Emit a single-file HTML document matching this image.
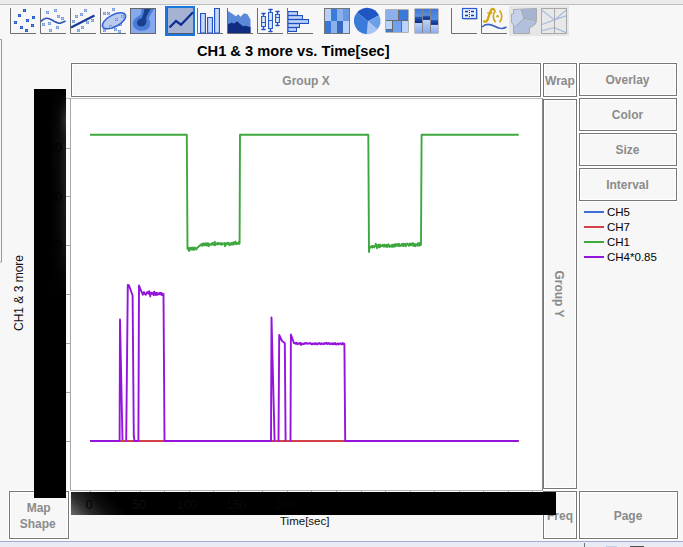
<!DOCTYPE html>
<html><head><meta charset="utf-8"><style>
html,body{margin:0;padding:0;width:683px;height:547px;overflow:hidden;background:#f7f7f7;}
svg{display:block;font-family:"Liberation Sans",sans-serif;}
</style></head><body>
<svg width="683" height="547" viewBox="0 0 683 547">
<rect width="683" height="547" fill="#f7f7f7"/>
<rect x="0" y="0" width="683" height="4" fill="#ebebeb"/>
<rect x="0" y="4" width="683" height="1" fill="#bdbdbd"/>
<path d="M10.5 8 V33.5 H36" fill="none" stroke="#6e6e6e" stroke-width="1"/>
<rect x="23.0" y="9.0" width="3" height="3" fill="#2050c4"/><rect x="24.0" y="9.0" width="1" height="3" fill="#3f70dc"/><rect x="23.0" y="10.0" width="3" height="1" fill="#3f70dc"/>
<rect x="18.0" y="14.0" width="3" height="3" fill="#2050c4"/><rect x="19.0" y="14.0" width="1" height="3" fill="#3f70dc"/><rect x="18.0" y="15.0" width="3" height="1" fill="#3f70dc"/>
<rect x="32.0" y="16.0" width="3" height="3" fill="#2050c4"/><rect x="33.0" y="16.0" width="1" height="3" fill="#3f70dc"/><rect x="32.0" y="17.0" width="3" height="1" fill="#3f70dc"/>
<rect x="26.0" y="19.0" width="3" height="3" fill="#2050c4"/><rect x="27.0" y="19.0" width="1" height="3" fill="#3f70dc"/><rect x="26.0" y="20.0" width="3" height="1" fill="#3f70dc"/>
<rect x="14.0" y="21.0" width="3" height="3" fill="#2050c4"/><rect x="15.0" y="21.0" width="1" height="3" fill="#3f70dc"/><rect x="14.0" y="22.0" width="3" height="1" fill="#3f70dc"/>
<rect x="31.0" y="24.0" width="3" height="3" fill="#2050c4"/><rect x="32.0" y="24.0" width="1" height="3" fill="#3f70dc"/><rect x="31.0" y="25.0" width="3" height="1" fill="#3f70dc"/>
<rect x="20.0" y="26.0" width="3" height="3" fill="#2050c4"/><rect x="21.0" y="26.0" width="1" height="3" fill="#3f70dc"/><rect x="20.0" y="27.0" width="3" height="1" fill="#3f70dc"/>
<rect x="25.0" y="29.0" width="3" height="3" fill="#2050c4"/><rect x="26.0" y="29.0" width="1" height="3" fill="#3f70dc"/><rect x="25.0" y="30.0" width="3" height="1" fill="#3f70dc"/>
<path d="M40.5 8 V33.5 H66" fill="none" stroke="#6e6e6e" stroke-width="1"/>
<rect x="46.0" y="11.0" width="3" height="3" fill="#7096da"/><rect x="47.0" y="11.0" width="1" height="3" fill="#9cb6ea"/><rect x="46.0" y="12.0" width="3" height="1" fill="#9cb6ea"/>
<rect x="54.0" y="9.0" width="3" height="3" fill="#7096da"/><rect x="55.0" y="9.0" width="1" height="3" fill="#9cb6ea"/><rect x="54.0" y="10.0" width="3" height="1" fill="#9cb6ea"/>
<rect x="57.0" y="15.0" width="3" height="3" fill="#7096da"/><rect x="58.0" y="15.0" width="1" height="3" fill="#9cb6ea"/><rect x="57.0" y="16.0" width="3" height="1" fill="#9cb6ea"/>
<rect x="61.0" y="17.0" width="3" height="3" fill="#7096da"/><rect x="62.0" y="17.0" width="1" height="3" fill="#9cb6ea"/><rect x="61.0" y="18.0" width="3" height="1" fill="#9cb6ea"/>
<rect x="42.0" y="23.0" width="3" height="3" fill="#7096da"/><rect x="43.0" y="23.0" width="1" height="3" fill="#9cb6ea"/><rect x="42.0" y="24.0" width="3" height="1" fill="#9cb6ea"/>
<rect x="48.0" y="22.0" width="3" height="3" fill="#7096da"/><rect x="49.0" y="22.0" width="1" height="3" fill="#9cb6ea"/><rect x="48.0" y="23.0" width="3" height="1" fill="#9cb6ea"/>
<rect x="56.0" y="26.0" width="3" height="3" fill="#7096da"/><rect x="57.0" y="26.0" width="1" height="3" fill="#9cb6ea"/><rect x="56.0" y="27.0" width="3" height="1" fill="#9cb6ea"/>
<rect x="49.0" y="29.0" width="3" height="3" fill="#7096da"/><rect x="50.0" y="29.0" width="1" height="3" fill="#9cb6ea"/><rect x="49.0" y="30.0" width="3" height="1" fill="#9cb6ea"/>
<path d="M41 21.5 C44 17.5 48 17.5 52 20 S59 24 61 23 S64 22 65.5 21" fill="none" stroke="#2f56b0" stroke-width="1.6"/>
<path d="M70.5 8 V33.5 H96" fill="none" stroke="#6e6e6e" stroke-width="1"/>
<rect x="84.0" y="9.0" width="3" height="3" fill="#7096da"/><rect x="85.0" y="9.0" width="1" height="3" fill="#9cb6ea"/><rect x="84.0" y="10.0" width="3" height="1" fill="#9cb6ea"/>
<rect x="80.0" y="13.0" width="3" height="3" fill="#7096da"/><rect x="81.0" y="13.0" width="1" height="3" fill="#9cb6ea"/><rect x="80.0" y="14.0" width="3" height="1" fill="#9cb6ea"/>
<rect x="75.0" y="15.0" width="3" height="3" fill="#7096da"/><rect x="76.0" y="15.0" width="1" height="3" fill="#9cb6ea"/><rect x="75.0" y="16.0" width="3" height="1" fill="#9cb6ea"/>
<rect x="72.0" y="20.0" width="3" height="3" fill="#7096da"/><rect x="73.0" y="20.0" width="1" height="3" fill="#9cb6ea"/><rect x="72.0" y="21.0" width="3" height="1" fill="#9cb6ea"/>
<rect x="86.0" y="21.0" width="3" height="3" fill="#7096da"/><rect x="87.0" y="21.0" width="1" height="3" fill="#9cb6ea"/><rect x="86.0" y="22.0" width="3" height="1" fill="#9cb6ea"/>
<rect x="91.0" y="19.0" width="3" height="3" fill="#7096da"/><rect x="92.0" y="19.0" width="1" height="3" fill="#9cb6ea"/><rect x="91.0" y="20.0" width="3" height="1" fill="#9cb6ea"/>
<rect x="81.0" y="26.0" width="3" height="3" fill="#7096da"/><rect x="82.0" y="26.0" width="1" height="3" fill="#9cb6ea"/><rect x="81.0" y="27.0" width="3" height="1" fill="#9cb6ea"/>
<rect x="77.0" y="29.0" width="3" height="3" fill="#7096da"/><rect x="78.0" y="29.0" width="1" height="3" fill="#9cb6ea"/><rect x="77.0" y="30.0" width="3" height="1" fill="#9cb6ea"/>
<path d="M71 27.5 L94.5 15.5" fill="none" stroke="#163a9a" stroke-width="2.2"/>
<path d="M100.5 8 V33.5 H126" fill="none" stroke="#6e6e6e" stroke-width="1"/>
<rect x="112.0" y="8.0" width="3" height="3" fill="#7096da"/><rect x="113.0" y="8.0" width="1" height="3" fill="#9cb6ea"/><rect x="112.0" y="9.0" width="3" height="1" fill="#9cb6ea"/>
<rect x="103.0" y="12.0" width="3" height="3" fill="#7096da"/><rect x="104.0" y="12.0" width="1" height="3" fill="#9cb6ea"/><rect x="103.0" y="13.0" width="3" height="1" fill="#9cb6ea"/>
<rect x="107.0" y="12.0" width="3" height="3" fill="#7096da"/><rect x="108.0" y="12.0" width="1" height="3" fill="#9cb6ea"/><rect x="107.0" y="13.0" width="3" height="1" fill="#9cb6ea"/>
<rect x="121.0" y="15.0" width="3" height="3" fill="#7096da"/><rect x="122.0" y="15.0" width="1" height="3" fill="#9cb6ea"/><rect x="121.0" y="16.0" width="3" height="1" fill="#9cb6ea"/>
<rect x="115.0" y="18.0" width="3" height="3" fill="#7096da"/><rect x="116.0" y="18.0" width="1" height="3" fill="#9cb6ea"/><rect x="115.0" y="19.0" width="3" height="1" fill="#9cb6ea"/>
<rect x="119.0" y="23.0" width="3" height="3" fill="#7096da"/><rect x="120.0" y="23.0" width="1" height="3" fill="#9cb6ea"/><rect x="119.0" y="24.0" width="3" height="1" fill="#9cb6ea"/>
<rect x="109.0" y="25.0" width="3" height="3" fill="#7096da"/><rect x="110.0" y="25.0" width="1" height="3" fill="#9cb6ea"/><rect x="109.0" y="26.0" width="3" height="1" fill="#9cb6ea"/>
<rect x="114.0" y="28.0" width="3" height="3" fill="#7096da"/><rect x="115.0" y="28.0" width="1" height="3" fill="#9cb6ea"/><rect x="114.0" y="29.0" width="3" height="1" fill="#9cb6ea"/>
<rect x="103.0" y="29.0" width="3" height="3" fill="#7096da"/><rect x="104.0" y="29.0" width="1" height="3" fill="#9cb6ea"/><rect x="103.0" y="30.0" width="3" height="1" fill="#9cb6ea"/>
<rect x="118.0" y="30.0" width="3" height="3" fill="#7096da"/><rect x="119.0" y="30.0" width="1" height="3" fill="#9cb6ea"/><rect x="118.0" y="31.0" width="3" height="1" fill="#9cb6ea"/>
<ellipse cx="114" cy="20.8" rx="12.8" ry="5.9" transform="rotate(-28 114 20.8)" fill="#b2c4ee" fill-opacity="0.9" stroke="#3262d6" stroke-width="1.5"/>
<rect x="115.0" y="18.0" width="3" height="3" fill="#7096da"/><rect x="116.0" y="18.0" width="1" height="3" fill="#9cb6ea"/><rect x="115.0" y="19.0" width="3" height="1" fill="#9cb6ea"/>
<rect x="109.0" y="25.0" width="3" height="3" fill="#7096da"/><rect x="110.0" y="25.0" width="1" height="3" fill="#9cb6ea"/><rect x="109.0" y="26.0" width="3" height="1" fill="#9cb6ea"/>
<rect x="121.0" y="15.0" width="3" height="3" fill="#7096da"/><rect x="122.0" y="15.0" width="1" height="3" fill="#9cb6ea"/><rect x="121.0" y="16.0" width="3" height="1" fill="#9cb6ea"/>
<rect x="130.5" y="8.5" width="25" height="25" fill="#86a9ee" stroke="#666" stroke-width="1"/>
<path d="M141 9 L154 9 C152 13 149 16 149 19 C151 22 151 28 146 30 C141 32 134 30 133 25 C132 21 135 18 139 16 C142 14 142 11 141 9 Z" fill="#4a7bd7"/>
<path d="M144.5 9 L150.5 9 C149 12 147 15 146 18.5 C147 21 146.5 25 143 26.3 C139.5 27.3 136.5 25 137 22 C137.5 19.5 140 19 142 18 C143 15 144 12 144.5 9 Z" fill="#1a3f8c"/>
<rect x="166" y="7" width="28" height="28" fill="#a6b2d2" stroke="#1a78dc" stroke-width="2"/>
<path d="M167.5 8 V33.5 H193" fill="none" stroke="#555a6e" stroke-width="1"/>
<path d="M169.5 27.5 L176 21 L181 24.7 L193 12.3" fill="none" stroke="#0c2d94" stroke-width="2.2"/>
<path d="M197.5 8 V33.5 H223" fill="none" stroke="#6e6e6e" stroke-width="1"/>
<defs><linearGradient id="bg1" x1="0" x2="1" y1="0" y2="0"><stop offset="0" stop-color="#8fb0f0"/><stop offset="0.5" stop-color="#d5e3fb"/><stop offset="1" stop-color="#8fb0f0"/></linearGradient><linearGradient id="bg2" x1="0" x2="0" y1="0" y2="1"><stop offset="0" stop-color="#86a8ec"/><stop offset="0.5" stop-color="#c2d5f8"/><stop offset="1" stop-color="#86a8ec"/></linearGradient><linearGradient id="bg3" x1="0" x2="1" y1="0" y2="0"><stop offset="0" stop-color="#b4cbf6"/><stop offset="0.5" stop-color="#dfe9fc"/><stop offset="1" stop-color="#b4cbf6"/></linearGradient><linearGradient id="gv" x1="0" x2="0" y1="0" y2="1"><stop offset="0" stop-color="#bcd2f8"/><stop offset="1" stop-color="#89aaea"/></linearGradient><linearGradient id="gd" x1="0" x2="0" y1="0" y2="1"><stop offset="0" stop-color="#2a5cbc"/><stop offset="1" stop-color="#08288a"/></linearGradient><linearGradient id="gm" x1="0" x2="0" y1="0" y2="1"><stop offset="0" stop-color="#3f78d8"/><stop offset="1" stop-color="#5a90e4"/></linearGradient><linearGradient id="gy" gradientUnits="userSpaceOnUse" x1="71" y1="515" x2="101" y2="486"><stop offset="0" stop-color="#6a6a6a"/><stop offset="0.35" stop-color="#2c2c2c"/><stop offset="0.7" stop-color="#0c0c0c"/><stop offset="1" stop-color="#000"/></linearGradient><radialGradient id="gyy" gradientUnits="userSpaceOnUse" cx="68" cy="120" r="18" gradientTransform="translate(68 120) scale(0.7 1.6) rotate(-25) translate(-68 -120)"><stop offset="0" stop-color="#3c3c3c" stop-opacity="1"/><stop offset="1" stop-color="#000" stop-opacity="0"/></radialGradient></defs>
<rect x="200.5" y="13.5" width="5.0" height="19.5" fill="url(#bg1)" stroke="#2553c9" stroke-width="1"/>
<rect x="207.5" y="17.5" width="5.0" height="15.5" fill="url(#bg1)" stroke="#2553c9" stroke-width="1"/>
<rect x="214.5" y="8.5" width="5.0" height="24.5" fill="url(#bg1)" stroke="#2553c9" stroke-width="1"/>
<path d="M227.5 8 V33.5 H253" fill="none" stroke="#6e6e6e" stroke-width="1"/>
<path d="M228 11 L233 14.3 L236 16.3 L238.2 14.3 L240.5 16.8 L244 13.2 L247.5 14.3 L250.5 19.4 L250.5 33 L228 33 Z" fill="#5b89d9"/>
<path d="M228 23.8 L230 23.5 L232 22.3 L233.7 23.8 L235.5 22.5 L237.2 21.2 L239.5 23.5 L243 26.3 L246 25.7 L248 26.4 L250.5 27 L250.5 33 L228 33 Z" fill="#0f2c82"/>
<path d="M257.5 8 V33.5 H283" fill="none" stroke="#6e6e6e" stroke-width="1"/>
<path d="M263.5 13.5 V16.5 M263.5 26.5 V29.5 M261.9 13.5 H265.1 M261.9 29.5 H265.1" stroke="#2553c9" stroke-width="1.4" stroke-linecap="round" fill="none"/>
<rect x="261.5" y="16.5" width="4" height="10.0" fill="url(#bg3)" stroke="#2a5ad0" stroke-width="1"/>
<path d="M261.5 22.5 H265.5" stroke="#2a5ad0" stroke-width="1"/>
<path d="M270.5 9.5 V12.5 M270.5 28.5 V31.5 M268.9 9.5 H272.1 M268.9 31.5 H272.1" stroke="#2553c9" stroke-width="1.4" stroke-linecap="round" fill="none"/>
<rect x="268.5" y="12.5" width="4" height="16.0" fill="url(#bg3)" stroke="#2a5ad0" stroke-width="1"/>
<path d="M268.5 20.5 H272.5" stroke="#2a5ad0" stroke-width="1"/>
<path d="M277.5 11.5 V14.5 M277.5 22.5 V25.5 M275.9 11.5 H279.1 M275.9 25.5 H279.1" stroke="#2553c9" stroke-width="1.4" stroke-linecap="round" fill="none"/>
<rect x="275.5" y="14.5" width="4" height="8.0" fill="url(#bg3)" stroke="#2a5ad0" stroke-width="1"/>
<path d="M275.5 17.5 H279.5" stroke="#2a5ad0" stroke-width="1"/>
<path d="M287.5 8 V33.5 H313" fill="none" stroke="#6e6e6e" stroke-width="1"/>
<rect x="288" y="11.5" width="9.5" height="4.0" fill="url(#bg2)" stroke="#1f4dc2" stroke-width="1"/>
<rect x="288" y="15.5" width="14.5" height="4.0" fill="url(#bg2)" stroke="#1f4dc2" stroke-width="1"/>
<rect x="288" y="19.5" width="20.5" height="4.0" fill="url(#bg2)" stroke="#1f4dc2" stroke-width="1"/>
<rect x="288" y="23.5" width="11.5" height="4.0" fill="url(#bg2)" stroke="#1f4dc2" stroke-width="1"/>
<rect x="288" y="27.5" width="8.5" height="4.0" fill="url(#bg2)" stroke="#1f4dc2" stroke-width="1"/>
<path d="M287.5 8 V33.5" stroke="#6e6e6e" stroke-width="1"/>
<rect x="324.5" y="8.5" width="6.5" height="12.5" fill="#b7cff8"/>
<rect x="324.5" y="21" width="6.5" height="12.5" fill="#3a78d8"/>
<rect x="331" y="8.5" width="6" height="12.5" fill="#3b7bd9"/>
<rect x="331" y="21" width="6" height="12.5" fill="#8bb0ec"/>
<rect x="337" y="8.5" width="6" height="12.5" fill="#8bb0ec"/>
<rect x="337" y="21" width="6" height="12.5" fill="#3868c0"/>
<rect x="343" y="8.5" width="6.5" height="12.5" fill="#6a98e0"/>
<rect x="343" y="21" width="6.5" height="12.5" fill="#b8d4fc"/>
<rect x="324.5" y="8.5" width="25" height="25" fill="none" stroke="#757575" stroke-width="1"/>
<path d="M368 21.3 L357.09 12.52 A13.2 13.2 0 0 1 379.06 15.21 Z" fill="#1f56c4"/>
<path d="M368 21.3 L379.06 15.21 A13.2 13.2 0 0 1 377.31 29.48 Z" fill="#6aa0e8"/>
<path d="M368 21.3 L377.31 29.48 A13.2 13.2 0 0 1 366.74 34.19 Z" fill="#a8c4f4"/>
<path d="M368 21.3 L366.74 34.19 A13.2 13.2 0 0 1 357.09 12.52 Z" fill="#3a7ad8"/>
<rect x="385.5" y="9.5" width="23" height="23" fill="#6a6a6a"/>
<rect x="386" y="10" width="12" height="10" fill="#8cb0ec"/>
<rect x="399" y="10" width="9" height="10" fill="#3a7ad8"/>
<rect x="386" y="21" width="6" height="8" fill="#b8d4fc"/>
<rect x="386" y="30" width="6" height="2" fill="#3a7ad8"/>
<rect x="393" y="21" width="8" height="11" fill="#70a0f0"/>
<rect x="402" y="21" width="6" height="11" fill="#b8d4fc"/>
<rect x="414.5" y="8.5" width="24" height="25" fill="#858585"/>
<rect x="415" y="9" width="7" height="7.800000000000001" fill="url(#gm)"/>
<rect x="415" y="16.8" width="7" height="6.199999999999999" fill="url(#gd)"/>
<rect x="415" y="23" width="7" height="10" fill="url(#gv)"/>
<rect x="423" y="9" width="7" height="6.800000000000001" fill="url(#gm)"/>
<rect x="423" y="15.8" width="7" height="4.099999999999998" fill="url(#gd)"/>
<rect x="423" y="19.9" width="7" height="13.100000000000001" fill="url(#gv)"/>
<rect x="431" y="9" width="7" height="10.899999999999999" fill="url(#gm)"/>
<rect x="431" y="19.9" width="7" height="5.0" fill="url(#gd)"/>
<rect x="431" y="24.9" width="7" height="8.100000000000001" fill="url(#gv)"/>
<path d="M451.5 8 V33.5 H477" fill="none" stroke="#6e6e6e" stroke-width="1"/>
<rect x="463.5" y="9.5" width="14" height="10" fill="#9a9aa8"/>
<rect x="462.5" y="8.5" width="14" height="10" fill="#eaf2fd" stroke="#2a5ad0" stroke-width="1.2"/>
<path d="M465 11.5 H468 M471 11.5 H474 M465 15.5 H468 M471 15.5 H474" stroke="#1a3a9a" stroke-width="1.3"/>
<circle cx="469.4" cy="10.4" r="0.6" fill="#1a3a9a"/>
<circle cx="469.4" cy="12.4" r="0.6" fill="#1a3a9a"/>
<circle cx="469.4" cy="14.4" r="0.6" fill="#1a3a9a"/>
<circle cx="469.4" cy="16.4" r="0.6" fill="#1a3a9a"/>
<path d="M481.5 8 V33.5 H507" fill="none" stroke="#6e6e6e" stroke-width="1"/>
<path d="M482 27 C485 24 489 23.5 494 26 S502 29.5 506.5 27" fill="none" stroke="#3a60c0" stroke-width="1.5"/>
<path d="M494.2 9.8 C493.6 8.4 491.6 8.4 490.8 10.6 L487.6 19.6 C486.9 21.6 485.6 22.3 484.1 21.3" fill="none" stroke="#d3a50f" stroke-width="2.3" stroke-linecap="round"/>
<path d="M487.3 13 H492.3" stroke="#d3a50f" stroke-width="1.6"/>
<path d="M495.6 10.4 Q490.9 16.3 495.6 22.2 M499.5 10.4 Q504.2 16.3 499.5 22.2" fill="none" stroke="#d3a50f" stroke-width="1.6"/>
<circle cx="497.6" cy="16.2" r="1.3" fill="#d3a50f"/>
<rect x="509" y="6" width="60" height="30" fill="#e6e6e6"/>
<path d="M513.5 9.5 L536.5 8.5 L536.5 20.5 L535.5 24 L529.5 28 L529.5 33.5 L513.5 33.5 L513.5 25 L511.5 22.5 L511.5 14 L513.5 14 Z" fill="#b1c0dc" stroke="#a9a9a9" stroke-width="1"/>
<path d="M514 10 L521 9.5 L524 18.4 L516 26 L513.5 24.5 L512 22 L512 14.5 L514 14.5 Z" fill="#c6d2e9"/>
<path d="M521 9.3 L536 8.8 L536 20 L524 18.4 Z" fill="#a5b5d1"/>
<path d="M521 9.3 L524 18.4 L536 20.5 M524 18.4 L516 26" fill="none" stroke="#a9a9a9" stroke-width="1"/>
<rect x="541.5" y="8.5" width="25" height="25" fill="#e8e8e8" stroke="#a8a8a8" stroke-width="1"/>
<path d="M542 10.2 L554.5 19.9 L566 10.2 M542 24.5 L554.5 19.9 L566 15.8 M542 30.7 L554.5 27.6 L566 32.7" fill="none" stroke="#a9bde2" stroke-width="1.3"/>
<path d="M554.5 9 V33" stroke="#a8a8a8" stroke-width="1"/>
<path d="M0 39.5 H1.5 V262 H0" fill="none" stroke="#9a9a9a" stroke-width="1"/>
<text x="197" y="55.6" font-size="14.65" font-weight="700" fill="#000" text-anchor="start" >CH1 &amp; 3 more vs. Time[sec]</text>
<rect x="71.5" y="63.5" width="469" height="33" fill="#f7f7f7" stroke="#ffffff" stroke-width="3"/>
<rect x="71.5" y="63.5" width="469" height="33" fill="none" stroke="#777777" stroke-width="1"/>
<text x="306" y="84.5" font-size="12" font-weight="700" fill="#8b8b8b" text-anchor="middle" >Group X</text>
<rect x="543.5" y="63.5" width="33" height="33" fill="#f7f7f7" stroke="#ffffff" stroke-width="3"/>
<rect x="543.5" y="63.5" width="33" height="33" fill="none" stroke="#777777" stroke-width="1"/>
<text x="560" y="84.5" font-size="12" font-weight="700" fill="#8b8b8b" text-anchor="middle" >Wrap</text>
<rect x="579.5" y="63.5" width="97" height="32" fill="#f7f7f7" stroke="#ffffff" stroke-width="3"/>
<rect x="579.5" y="63.5" width="97" height="32" fill="none" stroke="#777777" stroke-width="1"/>
<text x="627.5" y="83.9" font-size="12" font-weight="700" fill="#8b8b8b" text-anchor="middle" >Overlay</text>
<rect x="579.5" y="98.5" width="97" height="32" fill="#f7f7f7" stroke="#ffffff" stroke-width="3"/>
<rect x="579.5" y="98.5" width="97" height="32" fill="none" stroke="#777777" stroke-width="1"/>
<text x="627.5" y="118.9" font-size="12" font-weight="700" fill="#8b8b8b" text-anchor="middle" >Color</text>
<rect x="579.5" y="133.5" width="97" height="32" fill="#f7f7f7" stroke="#ffffff" stroke-width="3"/>
<rect x="579.5" y="133.5" width="97" height="32" fill="none" stroke="#777777" stroke-width="1"/>
<text x="627.5" y="153.9" font-size="12" font-weight="700" fill="#8b8b8b" text-anchor="middle" >Size</text>
<rect x="579.5" y="168.5" width="97" height="32" fill="#f7f7f7" stroke="#ffffff" stroke-width="3"/>
<rect x="579.5" y="168.5" width="97" height="32" fill="none" stroke="#777777" stroke-width="1"/>
<text x="627.5" y="188.9" font-size="12" font-weight="700" fill="#8b8b8b" text-anchor="middle" >Interval</text>
<rect x="543.5" y="99.5" width="33" height="389" fill="#f7f7f7" stroke="#ffffff" stroke-width="3"/>
<rect x="543.5" y="99.5" width="33" height="389" fill="none" stroke="#777777" stroke-width="1"/>
<text x="0" y="0" font-size="12" font-weight="700" fill="#8b8b8b" text-anchor="middle" transform="translate(555,294) rotate(90)">Group Y</text>
<rect x="543.5" y="491.5" width="33" height="47" fill="#f7f7f7" stroke="#ffffff" stroke-width="3"/>
<rect x="543.5" y="491.5" width="33" height="47" fill="none" stroke="#777777" stroke-width="1"/>
<text x="560" y="520" font-size="12" font-weight="700" fill="#8b8b8b" text-anchor="middle" >Freq</text>
<rect x="579.5" y="491.5" width="98" height="47" fill="#f7f7f7" stroke="#ffffff" stroke-width="3"/>
<rect x="579.5" y="491.5" width="98" height="47" fill="none" stroke="#777777" stroke-width="1"/>
<text x="628" y="520" font-size="12" font-weight="700" fill="#8b8b8b" text-anchor="middle" >Page</text>
<rect x="9.5" y="491.5" width="59" height="47" fill="#f7f7f7" stroke="#ffffff" stroke-width="3"/>
<rect x="9.5" y="491.5" width="59" height="47" fill="none" stroke="#777777" stroke-width="1"/>
<text x="38.7" y="511.7" font-size="12" font-weight="700" fill="#8b8b8b" text-anchor="middle" >Map</text>
<text x="37.7" y="527.5" font-size="12" font-weight="700" fill="#8b8b8b" text-anchor="middle" >Shape</text>
<rect x="584" y="211" width="20" height="2" fill="#3f6fd6"/>
<text x="607" y="216" font-size="11.5" font-weight="400" fill="#000" text-anchor="start" >CH5</text>
<rect x="584" y="226" width="20" height="2" fill="#d2414a"/>
<text x="607" y="231" font-size="11.5" font-weight="400" fill="#000" text-anchor="start" >CH7</text>
<rect x="584" y="241" width="20" height="2" fill="#3ea83e"/>
<text x="607" y="246" font-size="11.5" font-weight="400" fill="#000" text-anchor="start" >CH1</text>
<rect x="584" y="256" width="20" height="2" fill="#9414dc"/>
<text x="607" y="261" font-size="11.5" font-weight="400" fill="#000" text-anchor="start" >CH4*0.85</text>
<rect x="71" y="99" width="471" height="391" fill="#ffffff"/>
<rect x="66" y="99" width="4" height="391" fill="#fafafa"/>
<rect x="71" y="491" width="471" height="1" fill="#fcfcfc"/>
<path d="M66 98.5 H543" stroke="#bdbdbd" stroke-width="1"/>
<path d="M70.5 98 V490.5" stroke="#a8a8a8" stroke-width="1"/>
<path d="M70 490.5 H543" stroke="#b3b3b3" stroke-width="1"/>
<path d="M542.5 98 V491" stroke="#8a8a8a" stroke-width="1"/>
<path d="M66 148.5 H70" stroke="#a8a8a8" stroke-width="1"/>
<path d="M66 196.5 H70" stroke="#a8a8a8" stroke-width="1"/>
<path d="M66 245.5 H70" stroke="#a8a8a8" stroke-width="1"/>
<path d="M66 294.5 H70" stroke="#a8a8a8" stroke-width="1"/>
<path d="M66 343.5 H70" stroke="#a8a8a8" stroke-width="1"/>
<path d="M66 392.5 H70" stroke="#a8a8a8" stroke-width="1"/>
<path d="M66 441.5 H70" stroke="#a8a8a8" stroke-width="1"/>
<path d="M90.5 491 V492" stroke="#a8a8a8" stroke-width="1"/>
<path d="M115.5 491 V492" stroke="#a8a8a8" stroke-width="1"/>
<path d="M140.5 491 V492" stroke="#a8a8a8" stroke-width="1"/>
<path d="M164.5 491 V492" stroke="#a8a8a8" stroke-width="1"/>
<path d="M189.5 491 V492" stroke="#a8a8a8" stroke-width="1"/>
<path d="M213.5 491 V492" stroke="#a8a8a8" stroke-width="1"/>
<path d="M238.5 491 V492" stroke="#a8a8a8" stroke-width="1"/>
<path d="M262.5 491 V492" stroke="#a8a8a8" stroke-width="1"/>
<path d="M287.5 491 V492" stroke="#a8a8a8" stroke-width="1"/>
<path d="M311.5 491 V492" stroke="#a8a8a8" stroke-width="1"/>
<path d="M336.5 491 V492" stroke="#a8a8a8" stroke-width="1"/>
<path d="M361.5 491 V492" stroke="#a8a8a8" stroke-width="1"/>
<path d="M385.5 491 V492" stroke="#a8a8a8" stroke-width="1"/>
<path d="M410.5 491 V492" stroke="#a8a8a8" stroke-width="1"/>
<path d="M434.5 491 V492" stroke="#a8a8a8" stroke-width="1"/>
<path d="M459.5 491 V492" stroke="#a8a8a8" stroke-width="1"/>
<path d="M483.5 491 V492" stroke="#a8a8a8" stroke-width="1"/>
<path d="M508.5 491 V492" stroke="#a8a8a8" stroke-width="1"/>
<path d="M532.5 491 V492" stroke="#a8a8a8" stroke-width="1"/>
<polyline points="90.0,134.7 186.8,134.7 187.5,249.0 188.0,249.1 188.3,249.3 188.7,247.7 189.0,251.0 189.4,248.2 189.7,248.8 190.1,248.8 190.4,247.9 190.8,249.9 191.1,249.5 191.5,247.6 191.8,249.0 192.2,247.4 192.5,248.7 192.9,249.8 193.2,249.9 193.6,249.5 193.9,249.9 194.3,247.5 194.6,247.8 195.0,248.4 195.3,248.0 195.7,248.2 196.0,248.8 196.4,249.6 196.5,248.5 201.0,244.5 201.5,245.5 201.8,245.7 202.2,243.7 202.5,245.6 202.9,244.6 203.2,243.8 203.6,244.6 203.9,243.4 204.3,245.6 204.6,245.1 205.0,243.6 205.3,245.0 205.7,243.3 206.0,243.3 206.4,244.0 206.7,245.5 207.1,245.5 207.4,243.3 207.8,243.2 208.1,244.1 208.5,243.5 208.8,246.2 209.2,245.4 209.5,244.0 209.9,244.3 210.2,244.5 210.6,244.5 210.9,244.3 211.3,244.8 211.6,243.8 212.0,244.3 212.3,243.0 212.7,244.4 213.0,244.8 213.4,243.1 213.7,244.1 214.1,243.8 214.4,244.7 214.8,241.8 215.1,245.3 215.5,244.0 215.8,243.7 216.2,243.7 216.5,244.3 216.9,243.8 217.2,243.0 217.6,244.6 217.9,243.4 218.3,243.4 218.6,243.9 219.0,243.1 219.3,243.6 219.7,243.9 220.0,243.2 220.4,244.4 220.7,243.9 221.1,243.1 221.4,243.2 221.8,244.8 222.1,243.4 222.5,244.3 222.8,243.6 223.2,243.4 223.5,243.4 223.9,243.7 224.2,243.7 224.6,243.1 224.9,246.2 225.3,245.0 225.6,244.9 226.0,243.2 226.3,244.7 226.7,243.9 227.0,243.4 227.4,242.8 227.7,243.3 228.1,242.7 228.4,244.3 228.8,244.7 229.1,244.0 229.5,245.1 229.8,243.3 230.2,243.8 230.5,244.8 230.9,243.3 231.2,244.6 231.6,244.4 231.9,243.0 232.3,244.5 232.6,244.4 233.0,244.4 233.3,242.5 233.7,244.5 234.0,242.4 234.4,243.7 234.7,243.6 235.1,242.4 235.4,241.6 235.8,242.6 236.1,244.4 236.5,243.6 236.8,243.1 237.2,243.9 237.5,243.2 237.9,243.1 238.2,243.7 238.6,243.2 238.9,241.8 239.3,243.8 239.6,243.5 240.0,134.7 368.3,134.7 369.0,252.0 369.5,247.2 369.9,247.7 370.2,246.9 370.6,247.6 370.9,247.4 371.3,246.2 371.6,247.1 372.0,246.1 372.0,246.5 372.5,247.4 372.9,245.9 373.2,247.1 373.6,246.1 373.9,247.2 374.3,247.4 374.6,246.7 375.0,246.4 375.3,246.4 375.7,243.8 376.0,244.8 376.4,244.9 376.7,245.2 377.1,248.4 377.4,247.1 377.8,247.1 378.1,246.3 378.5,244.7 378.8,246.1 379.2,244.8 379.5,247.3 379.9,244.8 380.2,247.0 380.6,245.0 380.9,246.3 381.3,245.6 381.6,245.6 382.0,245.6 382.3,245.9 382.7,245.6 383.0,244.8 383.4,246.6 383.7,245.9 384.1,246.2 384.4,244.7 384.8,246.5 385.1,245.8 385.5,246.4 385.8,245.0 386.2,246.0 386.5,244.9 386.9,247.0 387.2,246.3 387.6,246.7 387.9,244.9 388.3,244.2 388.6,245.3 389.0,245.2 389.3,246.4 389.7,247.0 390.0,245.8 390.4,246.5 390.7,245.7 391.1,246.2 391.4,245.2 391.8,246.8 392.1,244.6 392.5,246.1 392.8,246.8 393.2,244.6 393.5,244.7 393.9,246.0 394.2,246.6 394.6,246.4 394.9,245.1 395.3,244.1 395.6,246.3 396.0,244.9 396.3,245.8 396.7,244.2 397.0,245.2 397.4,245.5 397.7,244.9 398.1,244.1 398.4,245.7 398.8,246.3 399.1,243.9 399.5,244.8 399.8,245.9 400.2,245.6 400.5,246.0 400.9,245.8 401.2,245.6 401.6,243.9 401.9,244.6 402.3,245.5 402.6,244.0 403.0,245.4 403.3,246.1 403.7,243.8 404.0,243.9 404.4,245.6 404.7,245.1 405.1,244.8 405.4,243.9 405.8,246.3 406.1,245.0 406.5,244.4 406.8,244.5 407.2,243.4 407.5,244.0 407.9,244.3 408.2,244.5 408.6,245.6 408.9,245.8 409.3,244.0 409.6,243.5 410.0,245.4 410.3,243.7 410.7,245.4 411.0,245.4 411.4,243.6 411.7,243.7 412.1,244.8 412.4,243.8 412.8,243.1 413.1,245.7 413.5,244.2 413.8,244.8 414.2,245.9 414.5,243.9 414.9,244.4 415.2,245.1 415.6,246.2 415.9,244.4 416.3,244.3 416.6,244.5 417.0,244.4 417.3,244.2 417.7,245.7 418.0,243.2 418.4,244.7 418.7,243.4 419.1,243.0 419.4,245.6 419.8,245.4 420.1,243.1 420.5,244.5 420.8,244.9 421.0,244.2 421.6,134.7 518.7,134.7" fill="none" stroke="#3ea83e" stroke-width="1.9" stroke-linejoin="round"/>
<path d="M90 441 H518.7" stroke="#d2414a" stroke-width="2"/>
<polyline points="90.0,441.0 119.6,441.0 120.0,319.5 122.5,441.0 126.2,441.0 127.8,285.0 129.0,285.5 132.6,295.5 133.8,436.0 134.5,441.0 138.4,441.0 139.0,285.5 142.0,293.0 142.5,293.4 142.8,294.9 143.1,293.6 143.4,293.8 143.7,292.6 144.0,292.1 144.3,293.8 144.6,293.9 144.9,294.2 145.2,293.7 145.5,293.6 145.8,294.9 146.1,293.5 146.4,293.9 146.7,293.1 147.0,292.2 147.3,292.9 147.6,293.1 147.9,293.0 148.2,293.0 148.5,291.6 148.8,293.8 149.1,291.1 149.4,293.6 149.7,292.7 150.0,293.6 150.3,296.5 150.6,292.8 150.9,293.0 151.2,293.5 151.5,292.7 151.8,293.3 152.1,293.8 152.4,293.4 152.7,293.3 153.0,294.2 153.3,292.8 153.6,295.1 153.9,292.6 154.2,291.6 154.5,292.7 154.8,294.8 155.1,293.1 155.4,293.9 155.7,295.0 156.0,292.7 156.3,294.2 156.6,292.9 156.9,294.9 157.2,293.7 157.5,294.4 157.8,293.1 158.1,294.6 158.4,294.1 158.7,293.6 159.0,293.3 159.3,293.9 159.6,293.1 159.9,294.2 160.2,293.7 160.5,293.1 160.8,292.7 161.1,294.7 161.4,292.9 161.7,294.9 162.0,295.0 162.3,293.9 162.6,294.6 162.9,293.7 163.0,294.0 163.5,294.0 164.5,441.0 271.0,441.0 271.5,317.5 274.6,441.0 278.5,441.0 279.2,335.0 282.0,341.0 284.8,343.0 285.6,441.0 290.5,441.0 290.9,334.5 293.7,342.5 294.0,343.2 294.5,342.9 295.0,343.0 295.5,343.7 296.0,342.9 296.5,343.7 297.0,342.8 297.5,344.2 298.0,343.6 298.5,343.9 299.0,343.9 299.5,343.1 300.0,342.9 300.5,343.0 301.0,345.0 301.5,344.1 302.0,343.5 302.5,344.0 303.0,343.8 303.5,344.1 304.0,343.7 304.5,343.0 305.0,343.7 305.5,343.2 306.0,343.5 306.5,343.0 307.0,343.6 307.5,343.7 308.0,343.5 308.5,343.7 309.0,343.4 309.5,343.4 310.0,343.0 310.5,343.1 311.0,343.9 311.5,344.3 312.0,344.2 312.5,343.5 313.0,344.2 313.5,343.6 314.0,343.5 314.5,344.2 315.0,344.2 315.5,343.1 316.0,343.3 316.5,343.8 317.0,344.4 317.5,343.5 318.0,344.0 318.5,343.3 319.0,343.4 319.5,343.1 320.0,344.0 320.5,344.3 321.0,344.2 321.5,343.2 322.0,343.6 322.5,343.7 323.0,344.2 323.5,343.6 324.0,344.1 324.5,343.3 325.0,343.0 325.5,343.7 326.0,343.2 326.5,342.8 327.0,343.7 327.5,344.1 328.0,343.1 328.5,343.0 329.0,343.5 329.5,343.9 330.0,343.5 330.5,344.1 331.0,343.4 331.5,343.5 332.0,344.0 332.5,344.2 333.0,343.2 333.5,344.1 334.0,344.2 334.5,343.4 335.0,343.1 335.5,344.3 336.0,343.7 336.5,344.4 337.0,343.9 337.5,343.8 338.0,343.3 338.5,344.5 339.0,343.6 339.5,343.7 340.0,343.7 340.5,343.3 341.0,343.8 341.5,344.3 342.0,344.4 342.5,343.1 343.0,343.9 343.5,343.5 344.0,343.8 344.4,343.8 345.2,441.0 518.7,441.0" fill="none" stroke="#9414dc" stroke-width="1.9" stroke-linejoin="round"/>
<path d="M121 441 H126 M128 441 H133 M139.5 441 H163 M275 441 H278 M286 441 H290 M291.5 441 H344" stroke="#d2414a" stroke-width="2"/>
<rect x="34" y="89" width="32" height="409" fill="#000"/>
<defs><linearGradient id="ghx" x1="0" x2="1" y1="0" y2="0"><stop offset="0" stop-color="#000"/><stop offset="0.55" stop-color="#0a0a0a"/><stop offset="1" stop-color="#1e1e1e"/></linearGradient><linearGradient id="gvm" x1="0" x2="0" y1="0" y2="1"><stop offset="0" stop-color="#fff" stop-opacity="0.3"/><stop offset="0.15" stop-color="#fff" stop-opacity="1"/><stop offset="0.7" stop-color="#fff" stop-opacity="0.8"/><stop offset="1" stop-color="#fff" stop-opacity="0"/></linearGradient><mask id="mv" maskUnits="userSpaceOnUse" x="34" y="89" width="32" height="409"><rect x="34" y="95" width="32" height="200" fill="url(#gvm)"/></mask></defs>
<rect x="50" y="95" width="16" height="200" fill="url(#ghx)" mask="url(#mv)"/>
<rect x="34" y="89" width="32" height="409" fill="url(#gyy)"/>
<text x="62" y="151.5" font-size="12" fill="#000" text-anchor="end">0</text>
<text x="62" y="200.5" font-size="12" fill="#000" text-anchor="end">80</text>
<text x="62" y="249" font-size="12" fill="#000" text-anchor="end">60</text>
<text x="62" y="298" font-size="12" fill="#000" text-anchor="end">40</text>
<text x="62" y="347" font-size="12" fill="#000" text-anchor="end">20</text>
<rect x="71" y="492" width="485" height="23" fill="url(#gy)"/>
<text x="89" y="508.5" font-size="12" font-weight="400" fill="#000" text-anchor="middle" >0</text>
<text x="139" y="508.5" font-size="12" font-weight="400" fill="#0e0e0e" text-anchor="middle" >50</text>
<text x="187" y="508.5" font-size="12" font-weight="400" fill="#0b0b0b" text-anchor="middle" >100</text>
<text x="236" y="508.5" font-size="12" font-weight="400" fill="#090909" text-anchor="middle" >150</text>
<text x="285" y="508.5" font-size="12" font-weight="400" fill="#070707" text-anchor="middle" >200</text>
<text x="280" y="525" font-size="11.5" font-weight="400" fill="#111" text-anchor="start" >Time[sec]</text>
<text x="0" y="0" font-size="12" font-weight="400" fill="#111" text-anchor="middle" transform="translate(22.5,293) rotate(-90)">CH1 &amp; 3 more</text>
<rect x="0" y="541" width="683" height="1" fill="#a2acd8"/>
<rect x="0" y="542" width="683" height="5" fill="#e8ebf2"/>
<rect x="584" y="543" width="1" height="4" fill="#6a7080"/>
<rect x="606" y="546" width="11" height="1" fill="#c0cfec"/>
<rect x="630" y="546" width="14" height="1" fill="#505050"/>
</svg>
</body></html>
